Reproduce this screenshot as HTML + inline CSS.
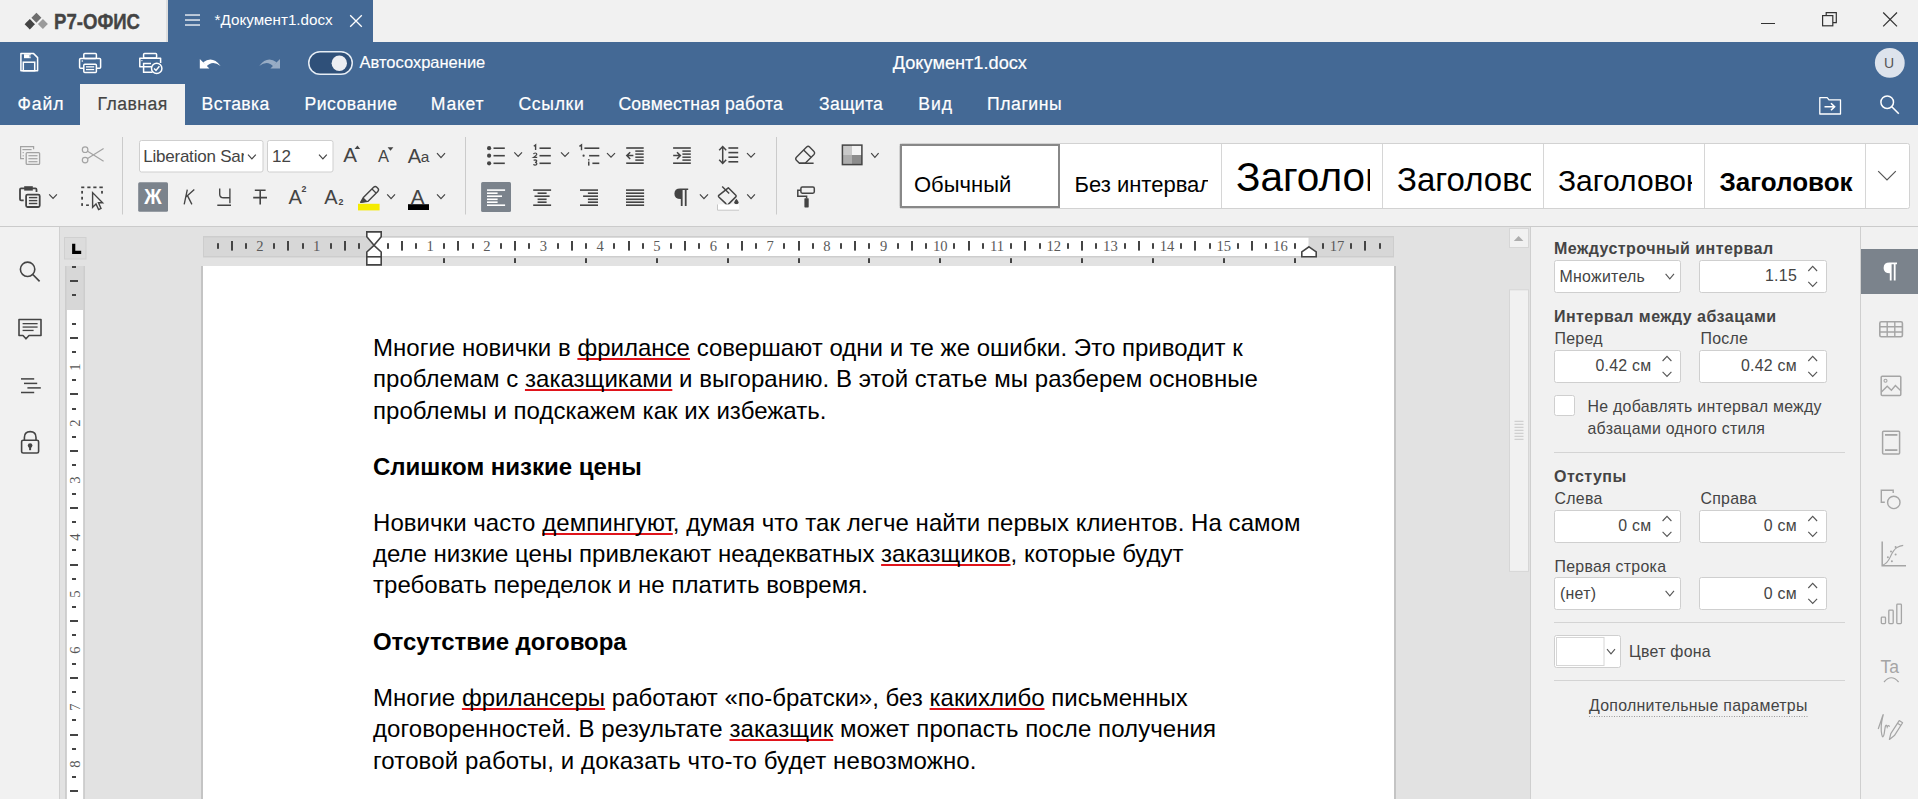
<!DOCTYPE html>
<html><head><meta charset="utf-8">
<style>
*{box-sizing:border-box;margin:0;padding:0}
html,body{width:1918px;height:799px;overflow:hidden;background:#f1f1f1;font-family:"Liberation Sans",sans-serif;color:#444}
.a{position:absolute}
.t{position:absolute;white-space:nowrap}
#ov{position:absolute;left:0;top:0}
.doc{position:absolute;left:373px;white-space:nowrap;font-size:24px;line-height:31px;color:#000;letter-spacing:0.03px}
.doc u{text-decoration:underline;text-decoration-color:#e0141b;text-decoration-thickness:1.6px;text-underline-offset:2px;text-decoration-skip-ink:none}
</style></head>
<body>
<svg id="ov" width="1918" height="799" viewBox="0 0 1918 799">
<rect x="0" y="0" width="1918" height="42" fill="#f1f1f1"/>
<path d="M29.8 19.1 Q30.400000000000002 19.700000000000003 35.0 24.3 Q34.4 24.900000000000002 29.8 29.5 Q29.2 28.9 24.6 24.3 Q25.200000000000003 23.7 29.8 19.1 Z" fill="#444"/>
<path d="M36.4 12.8 Q37.0 13.4 41.4 17.8 Q40.8 18.400000000000002 36.4 22.8 Q35.8 22.2 31.4 17.8 Q32.0 17.2 36.4 12.8 Z" fill="#6e6e6e"/>
<path d="M42.9 19.1 Q43.5 19.700000000000003 47.9 24.1 Q47.3 24.700000000000003 42.9 29.1 Q42.3 28.5 37.9 24.1 Q38.5 23.5 42.9 19.1 Z" fill="#9b9b9b"/>
<rect x="166" y="0" width="2" height="42" fill="#dedede"/>
<rect x="168" y="0" width="205" height="42" fill="#446995"/>
<rect x="185" y="14.4" width="15" height="1.25" fill="#fff"/>
<rect x="185" y="19.4" width="15" height="1.25" fill="#fff"/>
<rect x="185" y="24.4" width="15" height="1.25" fill="#fff"/>
<path d="M350.2 15.2L361.8 26.8M361.8 15.2L350.2 26.8" stroke="#fff" stroke-width="1.3"/>
<rect x="1761" y="23" width="14" height="1" fill="#333"/>
<path d="M1826.2 15.2V12.6H1836.3V22.7H1833" fill="none" stroke="#333" stroke-width="1.2"/>
<rect x="1822.6" y="15.6" width="10.2" height="10.2" fill="none" stroke="#333" stroke-width="1.2"/>
<path d="M1883.2 12.5L1897 26.3M1897 12.5L1883.2 26.3" stroke="#333" stroke-width="1.2"/>
<rect x="0" y="42" width="1918" height="83" fill="#446995"/>
<path d="M20.9 53.6H33.6L37.6 57.6V70.8H20.9Z" fill="none" stroke="#ffffff" stroke-width="1.5" stroke-linejoin="round"/>
<rect x="24" y="54.2" width="6.8" height="4" fill="#ffffff"/>
<rect x="29.6" y="55" width="1" height="2.4" fill="#446995"/>
<rect x="23.3" y="62.2" width="11.4" height="8.6" fill="none" stroke="#ffffff" stroke-width="1.5"/>
<rect x="83.8" y="53.6" width="12.6" height="5" rx="1" fill="none" stroke="#ffffff" stroke-width="1.5"/>
<rect x="79.6" y="58.4" width="21" height="9.8" rx="1" fill="none" stroke="#ffffff" stroke-width="1.5"/>
<rect x="83.8" y="64.2" width="12.6" height="8.2" rx="1" fill="#446995" stroke="#ffffff" stroke-width="1.5"/>
<rect x="86" y="66.2" width="8.2" height="1.3" fill="#ffffff"/><rect x="86" y="68.9" width="8.2" height="1.3" fill="#ffffff"/>
<circle cx="82.3" cy="61" r="0.8" fill="#ffffff"/>
<rect x="143.6" y="53.6" width="13" height="4.4" rx="1" fill="none" stroke="#ffffff" stroke-width="1.5"/>
<path d="M153 66.8H139.8V58.2H160.6V63" fill="none" stroke="#ffffff" stroke-width="1.5" stroke-linejoin="round"/>
<path d="M152.5 72.3H143.6V63.6H151" fill="none" stroke="#ffffff" stroke-width="1.5"/>
<circle cx="141.9" cy="60.6" r="0.7" fill="#ffffff"/>
<circle cx="156.7" cy="68.4" r="5.2" fill="#446995" stroke="#ffffff" stroke-width="1.5"/>
<path d="M154.1 68.4L156 70.4L159.4 66.3" fill="none" stroke="#ffffff" stroke-width="1.5"/>
<path d="M199.8 59L199.8 68.6L209.4 68.6Z" fill="#ffffff"/>
<path d="M203.2 62.2Q212.6 55.4 220.6 66Q212.2 59.6 206.4 66.6Z" fill="#ffffff"/>
<g opacity="0.45"><path d="M280 59L280 68.6L270.4 68.6Z" fill="#ffffff"/><path d="M276.6 62.2Q267.2 55.4 259.2 66Q267.6 59.6 273.4 66.6Z" fill="#ffffff"/></g>
<rect x="308.75" y="51.75" width="43.5" height="22.5" rx="11.25" fill="#2f5079" stroke="#e6edf5" stroke-width="1.5"/>
<circle cx="339.3" cy="63.3" r="7.7" fill="#ebedf2"/>
<circle cx="1889.8" cy="62.9" r="14.9" fill="#dde3ec"/>
<path d="M1819.8 114V97.6H1827.2L1829 99.8H1840.5V114Z" fill="none" stroke="#ffffff" stroke-width="1.3" stroke-linejoin="round"/>
<path d="M1824.5 106.8H1834.5M1831 103.3L1834.6 106.8L1831 110.3" fill="none" stroke="#ffffff" stroke-width="1.6"/>
<circle cx="1887.2" cy="102.2" r="6.3" fill="none" stroke="#ffffff" stroke-width="1.5"/><path d="M1891.8 106.8L1898.8 113.8" stroke="#ffffff" stroke-width="1.6"/>
<rect x="80" y="84" width="105" height="41" fill="#f1f1f1"/>
<rect x="0" y="125" width="1918" height="101" fill="#f1f1f1"/>
<rect x="0" y="226" width="1918" height="1" fill="#cbcbcb"/>
<rect x="122" y="137" width="1" height="77.5" fill="#cbcbcb"/>
<rect x="465" y="137" width="1" height="77.5" fill="#cbcbcb"/>
<rect x="776" y="137" width="1" height="77.5" fill="#cbcbcb"/>
<path d="M33.6 149.2V146.6H20.6V158.6H24" fill="none" stroke="#a3a3a3" stroke-width="1.2"/>
<rect x="22.4" y="149" width="9.2" height="1.2" fill="#a3a3a3"/><rect x="22.6" y="152" width="1.2" height="1.2" fill="#a3a3a3"/><rect x="22.6" y="155.2" width="1.2" height="1.2" fill="#a3a3a3"/>
<rect x="26.2" y="152.6" width="13.4" height="11.8" rx="1" fill="none" stroke="#a3a3a3" stroke-width="1.3"/>
<rect x="28.4" y="155.1" width="9.1" height="1.2" fill="#a3a3a3"/>
<rect x="28.4" y="158.1" width="9.1" height="1.2" fill="#a3a3a3"/>
<rect x="28.4" y="161.1" width="9.1" height="1.2" fill="#a3a3a3"/>
<circle cx="85.1" cy="149.7" r="2.8" fill="none" stroke="#a3a3a3" stroke-width="1.2"/><circle cx="85.1" cy="160.1" r="2.8" fill="none" stroke="#a3a3a3" stroke-width="1.2"/>
<path d="M87.6 151.3L103.6 161.2M87.6 158.5L103.6 148.4" stroke="#a3a3a3" stroke-width="1.2"/>
<rect x="24.2" y="186.2" width="8.6" height="4.4" fill="#444444"/>
<path d="M36.5 192V189.5Q36.5 188.4 35.4 188.4H21.1Q20 188.4 20 189.5V199.3Q20 200.4 21.1 200.4H23.7" fill="none" stroke="#444444" stroke-width="1.8"/>
<rect x="26.1" y="194.6" width="13.6" height="12.4" rx="1.4" fill="none" stroke="#444444" stroke-width="1.8"/>
<rect x="28.9" y="196.9" width="8.4" height="1.4" fill="#444444"/>
<rect x="28.9" y="199.9" width="8.4" height="1.4" fill="#444444"/>
<rect x="28.9" y="202.8" width="8.4" height="1.4" fill="#444444"/>
<path d="M49.2 194.4 L53.050000000000004 198.4 L56.900000000000006 194.4" fill="none" stroke="#444444" stroke-width="1.2"/>
<rect x="81.2" y="186.5" width="3.1" height="1.7" fill="#444444"/>
<rect x="87.3" y="186.5" width="3.2" height="1.7" fill="#444444"/>
<rect x="93.3" y="186.5" width="3.2" height="1.7" fill="#444444"/>
<rect x="99.4" y="186.5" width="3.4" height="1.7" fill="#444444"/>
<rect x="81.2" y="190.9" width="1.8" height="2.7" fill="#444444"/>
<rect x="81.2" y="196.8" width="1.8" height="2.8" fill="#444444"/>
<rect x="81.2" y="203.2" width="1.8" height="2.7" fill="#444444"/>
<rect x="101.1" y="190.9" width="1.8" height="2.7" fill="#444444"/><rect x="86.1" y="204.4" width="2.8" height="1.6" fill="#444444"/>
<path d="M92.6 192.6V207.4L96 204L98.6 209.6L101 208.4L98.5 202.8H102.6Z" fill="#f1f1f1" stroke="#444444" stroke-width="1.4" stroke-linejoin="miter"/>
<rect x="139.5" y="140.5" width="123.5" height="31.5" rx="2" fill="#fff" stroke="#cfcfcf" stroke-width="1"/>
<rect x="267.5" y="140.5" width="65.5" height="31.5" rx="2" fill="#fff" stroke="#cfcfcf" stroke-width="1"/>
<path d="M248 154.6 L251.9 158.79999999999998 L255.8 154.6" fill="none" stroke="#444444" stroke-width="1.2"/>
<path d="M319 154.6 L322.9 158.79999999999998 L326.8 154.6" fill="none" stroke="#444444" stroke-width="1.2"/>
<path d="M354.6 149L357.4 145.6L360.2 149Z" fill="#444444"/>
<path d="M387.6 147.2L390.5 150.8L393.4 147.2Z" fill="#444444"/>
<path d="M437 153.2 L441.0 157.6 L445 153.2" fill="none" stroke="#444444" stroke-width="1.2"/>
<rect x="138.2" y="182.2" width="29.8" height="29.6" rx="1.5" fill="#7b838c"/>
<path d="M184.2 204.4L187.3 189.6M194.3 189.5L185.6 197.3M187.6 195.9L191.9 204.4" fill="none" stroke="#444444" stroke-width="1.35"/>
<path d="M219.7 188.4V194.2Q219.7 197.7 223.6 197.7H229.9M229.9 188.4V203.3" fill="none" stroke="#444444" stroke-width="1.35"/>
<rect x="217.3" y="204.5" width="13.7" height="1.5" fill="#444444"/>
<path d="M254.8 190.2H265.6M260.2 190.2V204.6M253.2 197.6H267" fill="none" stroke="#444444" stroke-width="1.6"/>
<path d="M360.8 202.2L363.6 197.2L373.6 187.2Q375.2 185.6 376.8 187.2L377.8 188.2Q379.4 189.8 377.8 191.4L367.8 201.4Z" fill="none" stroke="#444444" stroke-width="1.4" stroke-linejoin="round"/>
<path d="M372 189L376 193" stroke="#444444" stroke-width="1.3"/>
<path d="M360 203L363.4 197.6L367.6 201.6Z" fill="#444444"/>
<rect x="358" y="203.8" width="21.6" height="6.6" fill="#f5eb00"/>
<path d="M387.2 194.3 L391.09999999999997 198.70000000000002 L395.0 194.3" fill="none" stroke="#444444" stroke-width="1.2"/>
<rect x="408" y="204.2" width="21" height="5.8" fill="#000"/>
<path d="M437 194.3 L441.0 198.70000000000002 L445 194.3" fill="none" stroke="#444444" stroke-width="1.2"/>
<circle cx="489.1" cy="148.2" r="2.1" fill="#444444"/><rect x="493.5" y="147.39999999999998" width="11.3" height="1.6" fill="#444444"/>
<circle cx="489.1" cy="155.7" r="2.1" fill="#444444"/><rect x="493.5" y="154.89999999999998" width="11.3" height="1.6" fill="#444444"/>
<circle cx="489.1" cy="163.3" r="2.1" fill="#444444"/><rect x="493.5" y="162.5" width="11.3" height="1.6" fill="#444444"/>
<path d="M514.3 152.4 L518.15 156.4 L522.0 152.4" fill="none" stroke="#444444" stroke-width="1.2"/>
<rect x="539.5" y="147.39999999999998" width="11.3" height="1.6" fill="#444444"/>
<rect x="539.5" y="154.89999999999998" width="11.3" height="1.6" fill="#444444"/>
<rect x="539.5" y="162.5" width="11.3" height="1.6" fill="#444444"/>
<path d="M533.8 146.2L535.6 144.9V150.1" fill="none" stroke="#444444" stroke-width="1.4"/>
<path d="M533.5 154.2Q533.8 153 535.2 153Q536.8 153 536.8 154.3Q536.7 155.3 533.5 157.4H537.2" fill="none" stroke="#444444" stroke-width="1.2"/>
<path d="M533.6 160.4Q534.2 159.8 535.2 159.8Q536.8 159.9 536.7 161.1Q536.6 162.2 535 162.3Q536.9 162.5 536.9 163.8Q536.7 165.1 535.1 165.1Q534 165.1 533.4 164.4" fill="none" stroke="#444444" stroke-width="1.2"/>
<path d="M561 152.4 L565.0 156.4 L569 152.4" fill="none" stroke="#444444" stroke-width="1.2"/>
<path d="M579.4 146.3L581.5 144.9V150.2" fill="none" stroke="#444444" stroke-width="1.4"/>
<rect x="584.4" y="147.4" width="14.9" height="1.6" fill="#444444"/>
<circle cx="583.6" cy="155.7" r="1.1" fill="#444444"/><rect x="589.1" y="154.9" width="10.2" height="1.6" fill="#444444"/>
<rect x="588" y="159.2" width="1.5" height="1.3" fill="#444444"/><rect x="588" y="161.5" width="1.5" height="4.1" fill="#444444"/><rect x="592.4" y="162.5" width="6.9" height="1.6" fill="#444444"/>
<path d="M607 153.1 L611.0 157.1 L615 153.1" fill="none" stroke="#444444" stroke-width="1.2"/>
<rect x="626.2" y="147.2" width="17.5" height="1.6" fill="#444444"/><rect x="626.2" y="162.4" width="17.5" height="1.6" fill="#444444"/>
<rect x="635.3" y="150.35" width="8.4" height="1.5" fill="#444444"/>
<rect x="635.3" y="153.35" width="8.4" height="1.5" fill="#444444"/>
<rect x="635.3" y="156.45" width="8.4" height="1.5" fill="#444444"/>
<rect x="635.3" y="159.35" width="8.4" height="1.5" fill="#444444"/>
<path d="M627 155.6H633.4M630.2 152.2L626.8 155.6L630.2 159" fill="none" stroke="#444444" stroke-width="1.5"/>
<rect x="673.1" y="147.2" width="17.7" height="1.6" fill="#444444"/><rect x="673.1" y="162.4" width="17.7" height="1.6" fill="#444444"/>
<rect x="682.4" y="150.35" width="8.4" height="1.5" fill="#444444"/>
<rect x="682.4" y="153.35" width="8.4" height="1.5" fill="#444444"/>
<rect x="682.4" y="156.45" width="8.4" height="1.5" fill="#444444"/>
<rect x="682.4" y="159.35" width="8.4" height="1.5" fill="#444444"/>
<path d="M673.2 155.6H680M677 152.2L680.4 155.6L677 159" fill="none" stroke="#444444" stroke-width="1.5"/>
<path d="M722.7 147V163M719.2 150.2L722.7 146.6L726.2 150.2M719.2 159.8L722.7 163.4L726.2 159.8" fill="none" stroke="#444444" stroke-width="1.5"/>
<rect x="728.4" y="147.2" width="9.8" height="1.6" fill="#444444"/>
<rect x="728.4" y="151.79999999999998" width="9.8" height="1.6" fill="#444444"/>
<rect x="728.4" y="156.39999999999998" width="9.8" height="1.6" fill="#444444"/>
<rect x="728.4" y="161.0" width="9.8" height="1.6" fill="#444444"/>
<path d="M747 153.1 L751.0 157.1 L755 153.1" fill="none" stroke="#444444" stroke-width="1.2"/>
<path d="M799.4 163.2L796.4 160.2Q795 158.6 796.4 157.2L806.6 147Q808.2 145.6 809.6 147L814 151.4Q815.4 152.9 814 154.4L805.2 163.2Z" fill="none" stroke="#444444" stroke-width="1.4" stroke-linejoin="round"/>
<path d="M799.4 163.2H813.6M803.6 149.9L811 157.3" fill="none" stroke="#444444" stroke-width="1.4"/>
<rect x="842.4" y="145" width="9.6" height="10" fill="#c9c9c9"/><rect x="852" y="145" width="9.9" height="10" fill="#f3f3f3"/><rect x="842.4" y="155" width="9.6" height="9.5" fill="#adadad"/><rect x="852" y="155" width="9.9" height="9.5" fill="#8c8c8c"/>
<rect x="842.4" y="145.1" width="19.5" height="19.5" fill="none" stroke="#444444" stroke-width="1.5"/>
<path d="M871.2 153.2 L874.9000000000001 157.39999999999998 L878.6 153.2" fill="none" stroke="#444444" stroke-width="1.2"/>
<rect x="481.1" y="182" width="29.9" height="29.9" rx="1.5" fill="#7b838c"/>
<rect x="487" y="189.29999999999998" width="18.1" height="1.6" fill="#fff"/>
<rect x="487" y="192.39999999999998" width="10.6" height="1.6" fill="#fff"/>
<rect x="487" y="195.39999999999998" width="15.0" height="1.6" fill="#fff"/>
<rect x="487" y="198.5" width="10.6" height="1.6" fill="#fff"/>
<rect x="487" y="201.39999999999998" width="10.6" height="1.6" fill="#fff"/>
<rect x="487" y="204.39999999999998" width="18.1" height="1.6" fill="#fff"/>
<rect x="533.2" y="189.29999999999998" width="17.9" height="1.6" fill="#444444"/>
<rect x="537.6" y="192.39999999999998" width="9.0" height="1.6" fill="#444444"/>
<rect x="534.5" y="195.39999999999998" width="15.1" height="1.6" fill="#444444"/>
<rect x="537.6" y="198.5" width="9.0" height="1.6" fill="#444444"/>
<rect x="537.6" y="201.39999999999998" width="9.0" height="1.6" fill="#444444"/>
<rect x="533.2" y="204.39999999999998" width="17.9" height="1.6" fill="#444444"/>
<rect x="580" y="189.29999999999998" width="18.0" height="1.6" fill="#444444"/>
<rect x="587.9" y="192.39999999999998" width="10.1" height="1.6" fill="#444444"/>
<rect x="583.1" y="195.39999999999998" width="14.9" height="1.6" fill="#444444"/>
<rect x="587.9" y="198.5" width="10.1" height="1.6" fill="#444444"/>
<rect x="587.9" y="201.39999999999998" width="10.1" height="1.6" fill="#444444"/>
<rect x="580" y="204.39999999999998" width="18.0" height="1.6" fill="#444444"/>
<rect x="626" y="189.29999999999998" width="18.1" height="1.6" fill="#444444"/>
<rect x="626" y="192.39999999999998" width="18.1" height="1.6" fill="#444444"/>
<rect x="626" y="195.39999999999998" width="18.1" height="1.6" fill="#444444"/>
<rect x="626" y="198.5" width="18.1" height="1.6" fill="#444444"/>
<rect x="626" y="201.39999999999998" width="18.1" height="1.6" fill="#444444"/>
<rect x="626" y="204.39999999999998" width="18.1" height="1.6" fill="#444444"/>
<path d="M680.2 188.4H688.2V190H686.6V206H684.8V190H682.6V206H680.8V199Q674.4 199 674.4 193.7Q674.4 188.4 680.2 188.4Z" fill="#444444"/>
<path d="M699.9 194.4 L703.9499999999999 198.70000000000002 L708.0 194.4" fill="none" stroke="#444444" stroke-width="1.2"/>
<path d="M728.3 187.8L735.8 195.3Q736.6 196.1 735.8 196.9L727 205.6L725.6 203.4L718.8 197Q718 196.2 718.8 195.4Z" fill="none" stroke="#444444" stroke-width="1.5" stroke-linejoin="round"/>
<path d="M722.2 186.6L729.2 193.6" stroke="#444444" stroke-width="1.4"/>
<path d="M736.4 198.8Q738.6 201.4 738.6 202.5Q738.6 204.2 736.4 204.2Q734.2 204.2 734.2 202.5Q734.2 201.4 736.4 198.8Z" fill="#444444"/>
<rect x="717" y="204.4" width="22" height="6" fill="#fff"/><path d="M717.5 204.4V210.2H739" fill="none" stroke="#c6c6c6" stroke-width="1"/>
<path d="M747.2 194.4 L751.0500000000001 198.70000000000002 L754.9000000000001 194.4" fill="none" stroke="#444444" stroke-width="1.2"/>
<rect x="800.9" y="187" width="13.4" height="6.2" rx="1.4" fill="none" stroke="#444444" stroke-width="1.5"/>
<path d="M800.9 190.2H797.8V196.2H806.6V198.6" fill="none" stroke="#444444" stroke-width="1.5"/>
<rect x="804.4" y="198.2" width="4.3" height="9.2" rx="0.6" fill="#444444"/>
<rect x="899.5" y="143.5" width="1010" height="65" rx="2" fill="#fff" stroke="#d2d2d2" stroke-width="1"/>
<rect x="1221" y="144" width="1" height="64" fill="#d6d6d6"/>
<rect x="1382" y="144" width="1" height="64" fill="#d6d6d6"/>
<rect x="1543" y="144" width="1" height="64" fill="#d6d6d6"/>
<rect x="1704" y="144" width="1" height="64" fill="#d6d6d6"/>
<rect x="1865" y="144" width="1" height="64" fill="#d6d6d6"/>
<rect x="901" y="145" width="158" height="62" fill="#fff" stroke="#888" stroke-width="2"/>
<path d="M1878.2 171.2 L1887.0 180.0 L1895.8 171.2" fill="none" stroke="#555" stroke-width="1.2"/>
<rect x="0" y="227" width="59" height="572" fill="#f1f1f1"/><rect x="59" y="227" width="1" height="572" fill="#d0d0d0"/>
<rect x="60" y="227" width="1470" height="572" fill="#e2e2e2"/>
<rect x="1530" y="227" width="1" height="572" fill="#cfcfcf"/><rect x="1531" y="227" width="329" height="572" fill="#f1f1f1"/>
<rect x="1860" y="227" width="1" height="572" fill="#cfcfcf"/><rect x="1861" y="227" width="57" height="572" fill="#f1f1f1"/>
<circle cx="27.6" cy="269.3" r="7.2" fill="none" stroke="#444444" stroke-width="1.6"/><path d="M32.8 274.5L39.6 281.4" stroke="#444444" stroke-width="1.7"/>
<path d="M19 319.5H41V335.5H29L26 338.8L23 335.5H19Z" fill="none" stroke="#444444" stroke-width="1.6" stroke-linejoin="round"/>
<rect x="22.6" y="323.0" width="15.0" height="1.3" fill="#444444"/>
<rect x="22.6" y="326.4" width="15.0" height="1.3" fill="#444444"/>
<rect x="22.6" y="329.79999999999995" width="11.0" height="1.3" fill="#444444"/>
<rect x="21" y="378.15" width="13.2" height="1.5" fill="#444444"/>
<rect x="24" y="382.65" width="13.2" height="1.5" fill="#444444"/>
<rect x="27.4" y="387.15" width="13.4" height="1.5" fill="#444444"/>
<rect x="21" y="391.75" width="13.2" height="1.5" fill="#444444"/>
<path d="M24.4 440.2V437.4Q24.4 431.6 30.2 431.6Q36 431.6 36 437.4V440.2" fill="none" stroke="#444444" stroke-width="1.6"/>
<rect x="21.6" y="440.2" width="17" height="12.8" rx="1.6" fill="none" stroke="#444444" stroke-width="1.6"/>
<circle cx="30.1" cy="445.6" r="2.3" fill="#444444"/><rect x="29.1" y="446" width="2" height="4.2" fill="#444444"/>
<rect x="64.5" y="237.5" width="21.5" height="21.5" fill="#dcdcdc" stroke="#d0d0d0" stroke-width="1"/>
<path d="M73.7 243.8V252.3H81.2" fill="none" stroke="#000" stroke-width="3.2"/>
<rect x="201" y="266" width="2" height="540" fill="#c4c4c4"/><rect x="203" y="266" width="1191" height="540" fill="#fff"/><rect x="1394" y="266" width="2" height="540" fill="#c4c4c4"/>
<rect x="203" y="236" width="1191" height="21.5" fill="#cdcdcd"/>
<rect x="204" y="237.5" width="1189" height="18.5" fill="#d7d7d7"/>
<rect x="373.4" y="237.8" width="935.1" height="18.2" fill="#fff"/>
<rect x="217" y="243.2" width="2" height="5.6" fill="#444444"/>
<rect x="231" y="241" width="2" height="9.6" fill="#444444"/>
<rect x="245" y="243.2" width="2" height="5.6" fill="#444444"/>
<rect x="273" y="243.2" width="2" height="5.6" fill="#444444"/>
<rect x="287" y="241" width="2" height="9.6" fill="#444444"/>
<rect x="302" y="243.2" width="2" height="5.6" fill="#444444"/>
<rect x="330" y="243.2" width="2" height="5.6" fill="#444444"/>
<rect x="344" y="241" width="2" height="9.6" fill="#444444"/>
<rect x="358" y="243.2" width="2" height="5.6" fill="#444444"/>
<rect x="387" y="243.2" width="2" height="5.6" fill="#444444"/>
<rect x="401" y="241" width="2" height="9.6" fill="#444444"/>
<rect x="415" y="243.2" width="2" height="5.6" fill="#444444"/>
<rect x="443" y="243.2" width="2" height="5.6" fill="#444444"/>
<rect x="457" y="241" width="2" height="9.6" fill="#444444"/>
<rect x="472" y="243.2" width="2" height="5.6" fill="#444444"/>
<rect x="500" y="243.2" width="2" height="5.6" fill="#444444"/>
<rect x="514" y="241" width="2" height="9.6" fill="#444444"/>
<rect x="528" y="243.2" width="2" height="5.6" fill="#444444"/>
<rect x="557" y="243.2" width="2" height="5.6" fill="#444444"/>
<rect x="571" y="241" width="2" height="9.6" fill="#444444"/>
<rect x="585" y="243.2" width="2" height="5.6" fill="#444444"/>
<rect x="613" y="243.2" width="2" height="5.6" fill="#444444"/>
<rect x="628" y="241" width="2" height="9.6" fill="#444444"/>
<rect x="642" y="243.2" width="2" height="5.6" fill="#444444"/>
<rect x="670" y="243.2" width="2" height="5.6" fill="#444444"/>
<rect x="684" y="241" width="2" height="9.6" fill="#444444"/>
<rect x="698" y="243.2" width="2" height="5.6" fill="#444444"/>
<rect x="727" y="243.2" width="2" height="5.6" fill="#444444"/>
<rect x="741" y="241" width="2" height="9.6" fill="#444444"/>
<rect x="755" y="243.2" width="2" height="5.6" fill="#444444"/>
<rect x="783" y="243.2" width="2" height="5.6" fill="#444444"/>
<rect x="798" y="241" width="2" height="9.6" fill="#444444"/>
<rect x="812" y="243.2" width="2" height="5.6" fill="#444444"/>
<rect x="840" y="243.2" width="2" height="5.6" fill="#444444"/>
<rect x="854" y="241" width="2" height="9.6" fill="#444444"/>
<rect x="868" y="243.2" width="2" height="5.6" fill="#444444"/>
<rect x="897" y="243.2" width="2" height="5.6" fill="#444444"/>
<rect x="911" y="241" width="2" height="9.6" fill="#444444"/>
<rect x="925" y="243.2" width="2" height="5.6" fill="#444444"/>
<rect x="953" y="243.2" width="2" height="5.6" fill="#444444"/>
<rect x="968" y="241" width="2" height="9.6" fill="#444444"/>
<rect x="982" y="243.2" width="2" height="5.6" fill="#444444"/>
<rect x="1010" y="243.2" width="2" height="5.6" fill="#444444"/>
<rect x="1024" y="241" width="2" height="9.6" fill="#444444"/>
<rect x="1039" y="243.2" width="2" height="5.6" fill="#444444"/>
<rect x="1067" y="243.2" width="2" height="5.6" fill="#444444"/>
<rect x="1081" y="241" width="2" height="9.6" fill="#444444"/>
<rect x="1095" y="243.2" width="2" height="5.6" fill="#444444"/>
<rect x="1124" y="243.2" width="2" height="5.6" fill="#444444"/>
<rect x="1138" y="241" width="2" height="9.6" fill="#444444"/>
<rect x="1152" y="243.2" width="2" height="5.6" fill="#444444"/>
<rect x="1180" y="243.2" width="2" height="5.6" fill="#444444"/>
<rect x="1194" y="241" width="2" height="9.6" fill="#444444"/>
<rect x="1209" y="243.2" width="2" height="5.6" fill="#444444"/>
<rect x="1237" y="243.2" width="2" height="5.6" fill="#444444"/>
<rect x="1251" y="241" width="2" height="9.6" fill="#444444"/>
<rect x="1265" y="243.2" width="2" height="5.6" fill="#444444"/>
<rect x="1294" y="243.2" width="2" height="5.6" fill="#444444"/>
<rect x="1322" y="243.2" width="2" height="5.6" fill="#444444"/>
<rect x="1350" y="243.2" width="2" height="5.6" fill="#444444"/>
<rect x="1364" y="241" width="2" height="9.6" fill="#444444"/>
<rect x="1379" y="243.2" width="2" height="5.6" fill="#444444"/>
<rect x="443" y="258.2" width="2" height="4.8" fill="#444444"/>
<rect x="514" y="258.2" width="2" height="4.8" fill="#444444"/>
<rect x="585" y="258.2" width="2" height="4.8" fill="#444444"/>
<rect x="656" y="258.2" width="2" height="4.8" fill="#444444"/>
<rect x="727" y="258.2" width="2" height="4.8" fill="#444444"/>
<rect x="798" y="258.2" width="2" height="4.8" fill="#444444"/>
<rect x="868" y="258.2" width="2" height="4.8" fill="#444444"/>
<rect x="939" y="258.2" width="2" height="4.8" fill="#444444"/>
<rect x="1010" y="258.2" width="2" height="4.8" fill="#444444"/>
<rect x="1081" y="258.2" width="2" height="4.8" fill="#444444"/>
<rect x="1152" y="258.2" width="2" height="4.8" fill="#444444"/>
<rect x="1223" y="258.2" width="2" height="4.8" fill="#444444"/>
<rect x="1294" y="258.2" width="2" height="4.8" fill="#444444"/>
<path d="M366.8 231.9H381.2V236.8L374 245.3L366.8 236.8Z" fill="#fff" stroke="#444444" stroke-width="1.6" stroke-linejoin="miter"/>
<path d="M374 245.3L381.2 252V264.9H366.8V252Z" fill="#fff" stroke="#444444" stroke-width="1.6"/>
<path d="M366.8 256.8H381.2" stroke="#444444" stroke-width="1.6"/>
<path d="M1309 246.8L1316.2 251.9V256.8H1301.8V251.9Z" fill="#fff" stroke="#444444" stroke-width="1.6"/>
<rect x="65" y="266" width="20" height="533" fill="#cdcdcd"/>
<rect x="66.5" y="266" width="17" height="533" fill="#d7d7d7"/>
<rect x="67" y="310" width="16" height="489" fill="#fff"/>
<rect x="72" y="266" width="4" height="2" fill="#444444"/>
<rect x="70" y="280" width="8" height="2" fill="#444444"/>
<rect x="72" y="294" width="4" height="2" fill="#444444"/>
<rect x="72" y="323" width="4" height="2" fill="#444444"/>
<rect x="70" y="337" width="8" height="2" fill="#444444"/>
<rect x="72" y="351" width="4" height="2" fill="#444444"/>
<rect x="72" y="379" width="4" height="2" fill="#444444"/>
<rect x="70" y="393" width="8" height="2" fill="#444444"/>
<rect x="72" y="408" width="4" height="2" fill="#444444"/>
<rect x="72" y="436" width="4" height="2" fill="#444444"/>
<rect x="70" y="450" width="8" height="2" fill="#444444"/>
<rect x="72" y="464" width="4" height="2" fill="#444444"/>
<rect x="72" y="493" width="4" height="2" fill="#444444"/>
<rect x="70" y="507" width="8" height="2" fill="#444444"/>
<rect x="72" y="521" width="4" height="2" fill="#444444"/>
<rect x="72" y="549" width="4" height="2" fill="#444444"/>
<rect x="70" y="564" width="8" height="2" fill="#444444"/>
<rect x="72" y="578" width="4" height="2" fill="#444444"/>
<rect x="72" y="606" width="4" height="2" fill="#444444"/>
<rect x="70" y="620" width="8" height="2" fill="#444444"/>
<rect x="72" y="634" width="4" height="2" fill="#444444"/>
<rect x="72" y="663" width="4" height="2" fill="#444444"/>
<rect x="70" y="677" width="8" height="2" fill="#444444"/>
<rect x="72" y="691" width="4" height="2" fill="#444444"/>
<rect x="72" y="719" width="4" height="2" fill="#444444"/>
<rect x="70" y="734" width="8" height="2" fill="#444444"/>
<rect x="72" y="748" width="4" height="2" fill="#444444"/>
<rect x="72" y="776" width="4" height="2" fill="#444444"/>
<rect x="70" y="790" width="8" height="2" fill="#444444"/>
<rect x="1509.5" y="228.5" width="19" height="19" fill="#f1f1f1" stroke="#d6d6d6" stroke-width="1"/>
<path d="M1513.8 241L1518.6 236L1523.4 241Z" fill="#adadad"/>
<rect x="1509.5" y="289.8" width="19" height="281.6" fill="#f1f1f1" stroke="#d6d6d6" stroke-width="1"/>
<rect x="1514.5" y="420.8" width="9" height="1" fill="#c8c8c8"/>
<rect x="1514.5" y="423.8" width="9" height="1" fill="#c8c8c8"/>
<rect x="1514.5" y="426.8" width="9" height="1" fill="#c8c8c8"/>
<rect x="1514.5" y="429.8" width="9" height="1" fill="#c8c8c8"/>
<rect x="1514.5" y="432.8" width="9" height="1" fill="#c8c8c8"/>
<rect x="1514.5" y="435.8" width="9" height="1" fill="#c8c8c8"/>
<rect x="1514.5" y="438.8" width="9" height="1" fill="#c8c8c8"/>
<rect x="1861" y="249" width="57" height="45" fill="#7b838c"/>
<path d="M1889.6 262.6H1897V264.2H1895.6V280.6H1893.8V264.2H1891.6V280.6H1889.8V273.2Q1883.6 273.2 1883.6 267.9Q1883.6 262.6 1889.6 262.6Z" fill="#fff"/>
<rect x="1879.8" y="321.8" width="22.6" height="15" rx="1.5" fill="none" stroke="#a5a5a5" stroke-width="1.6"/>
<path d="M1880 326.7H1902.2M1880 332H1902.2M1887.2 322V337M1894.8 322V337" stroke="#a5a5a5" stroke-width="1.4"/>
<rect x="1881.2" y="376.3" width="19.6" height="19.3" rx="1" fill="none" stroke="#a5a5a5" stroke-width="1.5"/>
<circle cx="1885.5" cy="380.7" r="1.5" fill="none" stroke="#a5a5a5" stroke-width="1.1"/><path d="M1881.4 392L1887.2 386.2L1891.4 390.2L1895.4 385.6L1900.8 390.8" fill="none" stroke="#a5a5a5" stroke-width="1.4"/>
<rect x="1882.6" y="431.2" width="17" height="22.8" rx="1" fill="none" stroke="#a5a5a5" stroke-width="1.5"/>
<rect x="1885" y="434" width="12.4" height="1.8" fill="#a5a5a5"/><rect x="1885" y="449.2" width="12.4" height="1.8" fill="#a5a5a5"/>
<path d="M1893.2 493V490.2H1881.3V502.2H1884.8" fill="none" stroke="#a5a5a5" stroke-width="1.4"/><circle cx="1893.8" cy="502.4" r="6.2" fill="none" stroke="#a5a5a5" stroke-width="1.4"/>
<path d="M1882.2 541.5V565.8H1906" fill="none" stroke="#a5a5a5" stroke-width="1.5"/><path d="M1882.8 565.2Q1887.5 563 1890 557.5Q1893.5 549.5 1897 547.5Q1900 545.8 1903.2 545.4" fill="none" stroke="#a5a5a5" stroke-width="1.1"/>
<circle cx="1895.6" cy="546.9" r="1" fill="#a5a5a5"/>
<circle cx="1891" cy="551.5" r="1" fill="#a5a5a5"/>
<circle cx="1895.6" cy="554.4" r="1" fill="#a5a5a5"/>
<circle cx="1887.9" cy="557.3" r="1" fill="#a5a5a5"/>
<circle cx="1891.9" cy="561.3" r="1" fill="#a5a5a5"/>
<rect x="1881.3" y="617.2" width="4.2" height="6.4" rx="0.8" fill="none" stroke="#a5a5a5" stroke-width="1.3"/><rect x="1888.8" y="610.2" width="4.4" height="13.4" rx="0.8" fill="none" stroke="#a5a5a5" stroke-width="1.3"/><rect x="1896.8" y="604.2" width="4.6" height="19.4" rx="0.8" fill="none" stroke="#a5a5a5" stroke-width="1.3"/>
<path d="M1884 682Q1891.3 673.5 1898.6 682" fill="none" stroke="#a5a5a5" stroke-width="1.2"/>
<path d="M1878.2 729Q1881 721 1882.6 716Q1883.8 712.6 1882.6 717.4Q1880.2 727 1881.8 734.6Q1883 739.4 1884.2 733.6Q1884.8 729 1885.4 726.2Q1886.4 723.8 1887.2 727Q1888.2 724.6 1889.6 726.6" fill="none" stroke="#a5a5a5" stroke-width="1.2"/>
<path d="M1889.4 739.4L1890.8 733.6L1899.2 720.6L1902.6 722.8L1894.4 735.6Z M1897.6 723.2L1901 725.4" fill="none" stroke="#a5a5a5" stroke-width="1.2" stroke-linejoin="round"/>
<rect x="1554.5" y="260.5" width="126" height="32" rx="2" fill="#fff" stroke="#cfcfcf" stroke-width="1"/>
<path d="M1665.6 273.8 L1669.8 278.8 L1674.0 273.8" fill="none" stroke="#555" stroke-width="1.1"/>
<rect x="1699.5" y="260.5" width="127" height="32" rx="2" fill="#fff" stroke="#cfcfcf" stroke-width="1"/>
<path d="M1808.3 271.0L1812.7 266.4L1817.1 271.0M1808.3 281.79999999999995L1812.7 286.4L1817.1 281.79999999999995" fill="none" stroke="#555" stroke-width="1.1"/>
<rect x="1554.5" y="350.5" width="126" height="32" rx="2" fill="#fff" stroke="#cfcfcf" stroke-width="1"/>
<rect x="1699.5" y="350.5" width="127" height="32" rx="2" fill="#fff" stroke="#cfcfcf" stroke-width="1"/>
<path d="M1662.6 361.0L1667.0 356.4L1671.3999999999999 361.0M1662.6 371.79999999999995L1667.0 376.4L1671.3999999999999 371.79999999999995" fill="none" stroke="#555" stroke-width="1.1"/>
<path d="M1808.3 361.0L1812.7 356.4L1817.1 361.0M1808.3 371.79999999999995L1812.7 376.4L1817.1 371.79999999999995" fill="none" stroke="#555" stroke-width="1.1"/>
<rect x="1554.5" y="395.5" width="20" height="20" rx="2" fill="#fff" stroke="#cfcfcf" stroke-width="1"/>
<rect x="1554" y="452" width="291" height="1" fill="#d4d4d4"/>
<rect x="1554.5" y="510.5" width="126" height="32" rx="2" fill="#fff" stroke="#cfcfcf" stroke-width="1"/>
<rect x="1699.5" y="510.5" width="127" height="32" rx="2" fill="#fff" stroke="#cfcfcf" stroke-width="1"/>
<path d="M1662.6 521.0L1667.0 516.4L1671.3999999999999 521.0M1662.6 531.8L1667.0 536.4L1671.3999999999999 531.8" fill="none" stroke="#555" stroke-width="1.1"/>
<path d="M1808.3 521.0L1812.7 516.4L1817.1 521.0M1808.3 531.8L1812.7 536.4L1817.1 531.8" fill="none" stroke="#555" stroke-width="1.1"/>
<rect x="1554.5" y="577.5" width="126" height="32" rx="2" fill="#fff" stroke="#cfcfcf" stroke-width="1"/>
<path d="M1665.6 590.8 L1669.8 595.8 L1674.0 590.8" fill="none" stroke="#555" stroke-width="1.1"/>
<rect x="1699.5" y="577.5" width="127" height="32" rx="2" fill="#fff" stroke="#cfcfcf" stroke-width="1"/>
<path d="M1808.3 588.0L1812.7 583.4L1817.1 588.0M1808.3 598.8L1812.7 603.4L1817.1 598.8" fill="none" stroke="#555" stroke-width="1.1"/>
<rect x="1554" y="622" width="291" height="1" fill="#d4d4d4"/>
<rect x="1554.5" y="635.5" width="66" height="32" rx="2" fill="#fff" stroke="#cfcfcf" stroke-width="1"/>
<rect x="1556.5" y="637.5" width="47.5" height="28" fill="#fff" stroke="#d6d6d6" stroke-width="1"/>
<path d="M1607 649.2 L1611.0 653.8000000000001 L1615 649.2" fill="none" stroke="#555" stroke-width="1.1"/>
<rect x="1554" y="680" width="291" height="1" fill="#d4d4d4"/>
<path d="M1589 716.5H1809" stroke="#999" stroke-width="1" stroke-dasharray="1 1.5"/>
</svg>
<div class="t" style="left:54.30px;top:6.68px;font-size:22px;line-height:29px;color:#444;font-weight:bold;transform:scaleX(0.845);transform-origin:0 0;-webkit-text-stroke:0.4px #444;">Р7-ОФИС</div>
<div class="t" style="left:214.6px;top:11px;font-size:15.2px;color:#fff;line-height:18px">*Документ1.docx</div>
<div class="t" style="left:359.5px;top:52.2px;font-size:16.5px;color:#fff;line-height:20px;-webkit-text-stroke:0.15px #fff">Автосохранение</div>
<div class="t" style="left:892.70px;top:50.99px;font-size:18.2px;line-height:24px;color:#fff;-webkit-text-stroke:0.2px #fff;">Документ1.docx</div>
<div class="t" style="left:1884px;top:55px;font-size:14px;color:#555;line-height:16px">U</div>
<div class="t" style="left:17.50px;top:93.10px;font-size:17.6px;line-height:23px;color:#fff;letter-spacing:0.9px;-webkit-text-stroke:0.2px #fff;">Файл</div>
<div class="t" style="left:97.50px;top:93.10px;font-size:17.6px;line-height:23px;color:#444;letter-spacing:0.467px;-webkit-text-stroke:0.2px #444;">Главная</div>
<div class="t" style="left:201.60px;top:93.10px;font-size:17.6px;line-height:23px;color:#fff;letter-spacing:0.383px;-webkit-text-stroke:0.2px #fff;">Вставка</div>
<div class="t" style="left:304.50px;top:93.10px;font-size:17.6px;line-height:23px;color:#fff;letter-spacing:0.488px;-webkit-text-stroke:0.2px #fff;">Рисование</div>
<div class="t" style="left:430.80px;top:93.10px;font-size:17.6px;line-height:23px;color:#fff;letter-spacing:0.725px;-webkit-text-stroke:0.2px #fff;">Макет</div>
<div class="t" style="left:518.50px;top:93.10px;font-size:17.6px;line-height:23px;color:#fff;letter-spacing:0.66px;-webkit-text-stroke:0.2px #fff;">Ссылки</div>
<div class="t" style="left:618.40px;top:93.10px;font-size:17.6px;line-height:23px;color:#fff;letter-spacing:0.219px;-webkit-text-stroke:0.2px #fff;">Совместная работа</div>
<div class="t" style="left:819.00px;top:93.10px;font-size:17.6px;line-height:23px;color:#fff;letter-spacing:0.3px;-webkit-text-stroke:0.2px #fff;">Защита</div>
<div class="t" style="left:918.30px;top:93.10px;font-size:17.6px;line-height:23px;color:#fff;letter-spacing:0.9px;-webkit-text-stroke:0.2px #fff;">Вид</div>
<div class="t" style="left:987.10px;top:93.10px;font-size:17.6px;line-height:23px;color:#fff;letter-spacing:0.533px;-webkit-text-stroke:0.2px #fff;">Плагины</div>
<div class="a" style="left:142px;top:146px;width:102px;height:22px;overflow:hidden"><div class="t" style="left:1.2px;top:1px;font-size:17px;line-height:20px;color:#444;letter-spacing:-0.22px">Liberation Sans</div></div>
<div class="t" style="left:272px;top:147px;font-size:17px;line-height:20px;color:#444">12</div>
<div class="t" style="left:343.3px;top:145.3px;font-size:20.6px;line-height:20px;color:#444">A</div>
<div class="t" style="left:378px;top:148px;font-size:16.5px;line-height:16px;color:#444">A</div>
<div class="t" style="left:407.8px;top:145.5px;font-size:20px;line-height:20px;color:#444">A</div>
<div class="t" style="left:420.8px;top:148.2px;font-size:15.4px;line-height:18px;color:#444">a</div>
<div class="t" style="left:139.2px;top:185.1px;font-size:21.3px;line-height:24px;color:#fff;font-weight:bold;width:28px;text-align:center;transform:scaleX(0.9)">Ж</div>
<div class="t" style="left:288.6px;top:186.6px;font-size:20px;line-height:20px;color:#444">A</div>
<div class="t" style="left:301.4px;top:184.9px;font-size:8.8px;line-height:9px;color:#444;font-weight:bold">2</div>
<div class="t" style="left:324.2px;top:187.1px;font-size:20px;line-height:20px;color:#444">A</div>
<div class="t" style="left:338.6px;top:198.3px;font-size:8.8px;line-height:9px;color:#444;font-weight:bold">2</div>
<div class="t" style="left:410.8px;top:186.6px;font-size:20.5px;line-height:20px;color:#444">A</div>
<div class="t" style="left:914px;top:172.5px;font-size:22px;line-height:24px;color:#000">Обычный</div>
<div class="a" style="left:1074.5px;top:165px;width:133px;height:32px;overflow:hidden"><div class="t" style="left:0;top:7.5px;font-size:22px;line-height:24px;color:#000">Без интервала</div></div>
<div class="a" style="left:1236px;top:150px;width:134px;height:50px;overflow:hidden"><div class="t" style="left:0;top:5px;font-size:40.5px;line-height:44px;color:#000">Заголовок 1</div></div>
<div class="a" style="left:1397px;top:155px;width:134px;height:45px;overflow:hidden"><div class="t" style="left:0;top:6px;font-size:33px;line-height:38px;color:#000">Заголовок 2</div></div>
<div class="a" style="left:1558px;top:158px;width:134px;height:42px;overflow:hidden"><div class="t" style="left:0;top:6px;font-size:30px;line-height:34px;color:#000">Заголовок 3</div></div>
<div class="t" style="left:1719.5px;top:166.5px;font-size:26px;line-height:30px;color:#000;font-weight:bold">Заголовок</div>
<div class="t" style="left:240.0px;top:238.7px;width:40px;text-align:center;font-family:'Liberation Serif',serif;font-size:14.6px;line-height:14px;color:#5a5a5a">2</div>
<div class="t" style="left:296.7px;top:238.7px;width:40px;text-align:center;font-family:'Liberation Serif',serif;font-size:14.6px;line-height:14px;color:#5a5a5a">1</div>
<div class="t" style="left:410.1px;top:238.7px;width:40px;text-align:center;font-family:'Liberation Serif',serif;font-size:14.6px;line-height:14px;color:#5a5a5a">1</div>
<div class="t" style="left:466.8px;top:238.7px;width:40px;text-align:center;font-family:'Liberation Serif',serif;font-size:14.6px;line-height:14px;color:#5a5a5a">2</div>
<div class="t" style="left:523.5px;top:238.7px;width:40px;text-align:center;font-family:'Liberation Serif',serif;font-size:14.6px;line-height:14px;color:#5a5a5a">3</div>
<div class="t" style="left:580.2px;top:238.7px;width:40px;text-align:center;font-family:'Liberation Serif',serif;font-size:14.6px;line-height:14px;color:#5a5a5a">4</div>
<div class="t" style="left:636.8px;top:238.7px;width:40px;text-align:center;font-family:'Liberation Serif',serif;font-size:14.6px;line-height:14px;color:#5a5a5a">5</div>
<div class="t" style="left:693.5px;top:238.7px;width:40px;text-align:center;font-family:'Liberation Serif',serif;font-size:14.6px;line-height:14px;color:#5a5a5a">6</div>
<div class="t" style="left:750.2px;top:238.7px;width:40px;text-align:center;font-family:'Liberation Serif',serif;font-size:14.6px;line-height:14px;color:#5a5a5a">7</div>
<div class="t" style="left:806.9px;top:238.7px;width:40px;text-align:center;font-family:'Liberation Serif',serif;font-size:14.6px;line-height:14px;color:#5a5a5a">8</div>
<div class="t" style="left:863.6px;top:238.7px;width:40px;text-align:center;font-family:'Liberation Serif',serif;font-size:14.6px;line-height:14px;color:#5a5a5a">9</div>
<div class="t" style="left:920.3px;top:238.7px;width:40px;text-align:center;font-family:'Liberation Serif',serif;font-size:14.6px;line-height:14px;color:#5a5a5a">10</div>
<div class="t" style="left:977.0px;top:238.7px;width:40px;text-align:center;font-family:'Liberation Serif',serif;font-size:14.6px;line-height:14px;color:#5a5a5a">11</div>
<div class="t" style="left:1033.7px;top:238.7px;width:40px;text-align:center;font-family:'Liberation Serif',serif;font-size:14.6px;line-height:14px;color:#5a5a5a">12</div>
<div class="t" style="left:1090.4px;top:238.7px;width:40px;text-align:center;font-family:'Liberation Serif',serif;font-size:14.6px;line-height:14px;color:#5a5a5a">13</div>
<div class="t" style="left:1147.1px;top:238.7px;width:40px;text-align:center;font-family:'Liberation Serif',serif;font-size:14.6px;line-height:14px;color:#5a5a5a">14</div>
<div class="t" style="left:1203.8px;top:238.7px;width:40px;text-align:center;font-family:'Liberation Serif',serif;font-size:14.6px;line-height:14px;color:#5a5a5a">15</div>
<div class="t" style="left:1260.4px;top:238.7px;width:40px;text-align:center;font-family:'Liberation Serif',serif;font-size:14.6px;line-height:14px;color:#5a5a5a">16</div>
<div class="t" style="left:1317.1px;top:238.7px;width:40px;text-align:center;font-family:'Liberation Serif',serif;font-size:14.6px;line-height:14px;color:#5a5a5a">17</div>
<div class="t" style="left:55px;top:359.7px;width:40px;text-align:center;font-family:'Liberation Serif',serif;font-size:14.6px;line-height:14px;color:#555;transform:rotate(-90deg)">1</div>
<div class="t" style="left:55px;top:416.4px;width:40px;text-align:center;font-family:'Liberation Serif',serif;font-size:14.6px;line-height:14px;color:#555;transform:rotate(-90deg)">2</div>
<div class="t" style="left:55px;top:473.1px;width:40px;text-align:center;font-family:'Liberation Serif',serif;font-size:14.6px;line-height:14px;color:#555;transform:rotate(-90deg)">3</div>
<div class="t" style="left:55px;top:529.8px;width:40px;text-align:center;font-family:'Liberation Serif',serif;font-size:14.6px;line-height:14px;color:#555;transform:rotate(-90deg)">4</div>
<div class="t" style="left:55px;top:586.5px;width:40px;text-align:center;font-family:'Liberation Serif',serif;font-size:14.6px;line-height:14px;color:#555;transform:rotate(-90deg)">5</div>
<div class="t" style="left:55px;top:643.1px;width:40px;text-align:center;font-family:'Liberation Serif',serif;font-size:14.6px;line-height:14px;color:#555;transform:rotate(-90deg)">6</div>
<div class="t" style="left:55px;top:699.8px;width:40px;text-align:center;font-family:'Liberation Serif',serif;font-size:14.6px;line-height:14px;color:#555;transform:rotate(-90deg)">7</div>
<div class="t" style="left:55px;top:756.5px;width:40px;text-align:center;font-family:'Liberation Serif',serif;font-size:14.6px;line-height:14px;color:#555;transform:rotate(-90deg)">8</div>
<div class="t" style="left:1880.6px;top:657.4px;font-size:17.5px;line-height:20px;color:#a5a5a5">Ta</div>
<div class="t" style="left:1554.00px;top:237.96px;font-size:16.0px;line-height:21px;color:#444;font-weight:bold;letter-spacing:0.45px;">Междустрочный интервал</div>
<div class="t" style="left:1559.50px;top:265.99px;font-size:15.9px;line-height:21px;color:#444;letter-spacing:0.27px;">Множитель</div>
<div class="t" style="left:1677px;top:266.49px;width:120px;text-align:right;font-size:15.9px;line-height:20px;color:#444;letter-spacing:0.27px">1.15</div>
<div class="t" style="left:1554.00px;top:305.96px;font-size:16.0px;line-height:21px;color:#444;font-weight:bold;letter-spacing:0.45px;">Интервал между абзацами</div>
<div class="t" style="left:1554.50px;top:327.79px;font-size:15.9px;line-height:21px;color:#444;letter-spacing:0.27px;">Перед</div>
<div class="t" style="left:1700.50px;top:327.79px;font-size:15.9px;line-height:21px;color:#444;letter-spacing:0.27px;">После</div>
<div class="t" style="left:1531.5px;top:356.49px;width:120px;text-align:right;font-size:15.9px;line-height:20px;color:#444;letter-spacing:0.27px">0.42 см</div>
<div class="t" style="left:1677px;top:356.49px;width:120px;text-align:right;font-size:15.9px;line-height:20px;color:#444;letter-spacing:0.27px">0.42 см</div>
<div class="t" style="left:1587.50px;top:395.99px;font-size:15.9px;line-height:21px;color:#444;letter-spacing:0.27px;">Не добавлять интервал между</div>
<div class="t" style="left:1587.50px;top:417.59px;font-size:15.9px;line-height:21px;color:#444;letter-spacing:0.27px;">абзацами одного стиля</div>
<div class="t" style="left:1554.00px;top:465.96px;font-size:16.0px;line-height:21px;color:#444;font-weight:bold;letter-spacing:0.45px;">Отступы</div>
<div class="t" style="left:1554.50px;top:487.59px;font-size:15.9px;line-height:21px;color:#444;letter-spacing:0.27px;">Слева</div>
<div class="t" style="left:1700.50px;top:487.59px;font-size:15.9px;line-height:21px;color:#444;letter-spacing:0.27px;">Справа</div>
<div class="t" style="left:1531.5px;top:516.49px;width:120px;text-align:right;font-size:15.9px;line-height:20px;color:#444;letter-spacing:0.27px">0 см</div>
<div class="t" style="left:1677px;top:516.49px;width:120px;text-align:right;font-size:15.9px;line-height:20px;color:#444;letter-spacing:0.27px">0 см</div>
<div class="t" style="left:1554.50px;top:555.99px;font-size:15.9px;line-height:21px;color:#444;letter-spacing:0.27px;">Первая строка</div>
<div class="t" style="left:1560.00px;top:583.49px;font-size:15.9px;line-height:21px;color:#444;letter-spacing:0.27px;">(нет)</div>
<div class="t" style="left:1677px;top:583.99px;width:120px;text-align:right;font-size:15.9px;line-height:20px;color:#444;letter-spacing:0.27px">0 см</div>
<div class="t" style="left:1629.00px;top:640.99px;font-size:15.9px;line-height:21px;color:#444;letter-spacing:0.27px;">Цвет фона</div>
<div class="t" style="left:1589.00px;top:694.59px;font-size:15.9px;line-height:21px;color:#444;letter-spacing:0.27px;">Дополнительные параметры</div>
<div class="doc" style="top:332.0px;letter-spacing:0.02px;">Многие новички в <u>фрилансе</u> совершают одни и те же ошибки. Это приводит к</div>
<div class="doc" style="top:363.0px;letter-spacing:0.045px;">проблемам с <u>заказщиками</u> и выгоранию. В этой статье мы разберем основные</div>
<div class="doc" style="top:394.5px;letter-spacing:0.03px;">проблемы и подскажем как их избежать.</div>
<div class="doc" style="top:450.5px;letter-spacing:0.0px;font-weight:bold;">Слишком низкие цены</div>
<div class="doc" style="top:506.5px;letter-spacing:0.05px;">Новички часто <u>демпингуют</u>, думая что так легче найти первых клиентов. На самом</div>
<div class="doc" style="top:537.5px;letter-spacing:-0.003px;">деле низкие цены привлекают неадекватных <u>заказщиков</u>, которые будут</div>
<div class="doc" style="top:568.5px;letter-spacing:0.05px;">требовать переделок и не платить вовремя.</div>
<div class="doc" style="top:625.5px;letter-spacing:-0.05px;font-weight:bold;">Отсутствие договора</div>
<div class="doc" style="top:681.6px;letter-spacing:0.016px;">Многие <u>фрилансеры</u> работают «по-братски», без <u>какихлибо</u> письменных</div>
<div class="doc" style="top:713.0px;letter-spacing:0.08px;">договоренностей. В результате <u>заказщик</u> может пропасть после получения</div>
<div class="doc" style="top:745.0px;letter-spacing:0.12px;">готовой работы, и доказать что-то будет невозможно.</div>
</body></html>
